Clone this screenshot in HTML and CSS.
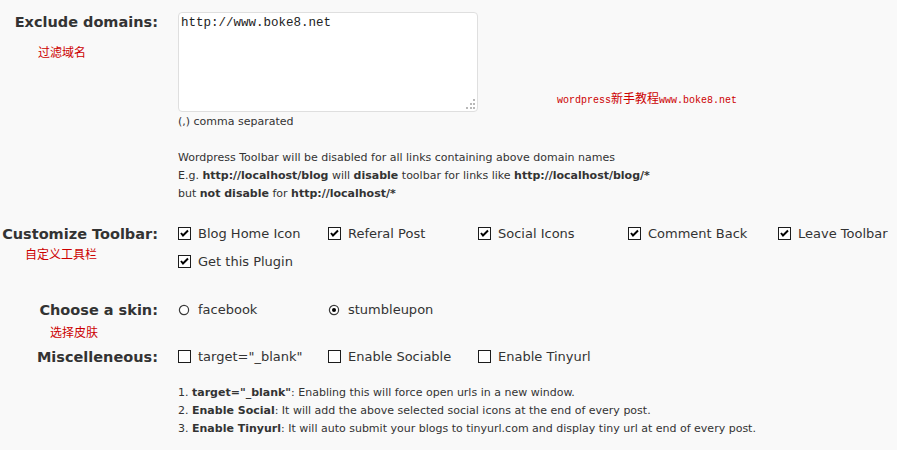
FILE: index.html
```html
<!DOCTYPE html>
<html lang="en">
  <head>
    <meta charset="UTF-8" />
    <meta name="viewport" content="width=device-width, initial-scale=1.0" />
    <title>Wordpress Toolbar Options</title>
    <link rel="stylesheet" href="styles.css">
  </head>
  <body>
    <div class="options">
      <!-- exclude domains -->
      <div class="row row-exclude">
        <div class="label-cell">
          <div class="label">Exclude domains:</div>
          <div class="cn cn-exclude">过滤域名</div>
        </div>
        <div class="field">
          <div class="field-line">
            <div class="textarea-wrap">
              <textarea class="domains" spellcheck="false">http://www.boke8.net</textarea>
              <svg class="grip" width="12" height="12" viewBox="0 0 12 12">
                <rect x="9" y="1" width="2" height="2" fill="#b8b8b8" />
                <rect x="6" y="5" width="2" height="2" fill="#b8b8b8" />
                <rect x="9" y="5" width="2" height="2" fill="#b8b8b8" />
                <rect x="2" y="9" width="2" height="2" fill="#b8b8b8" />
                <rect x="6" y="9" width="2" height="2" fill="#b8b8b8" />
                <rect x="9" y="9" width="2" height="2" fill="#b8b8b8" />
              </svg>
            </div>
            <span class="site-note">wordpress<span class="site-cjk">新手教程</span>www.boke8.net</span>
          </div>
          <p class="hint">(,) comma separated</p>
          <div class="notes notes-exclude">
            <p>Wordpress Toolbar will be disabled for all links containing above domain names</p>
            <p>E.g. <b>http://localhost/blog</b> will <b>disable</b> toolbar for links like <b>http://localhost/blog/*</b></p>
            <p>but <b>not disable</b> for <b>http://localhost/*</b></p>
          </div>
        </div>
      </div>

      <!-- toolbar items -->
      <div class="row row-toolbar">
        <div class="label-cell">
          <div class="label">Customize Toolbar:</div>
          <div class="cn cn-toolbar">自定义工具栏</div>
        </div>
        <div class="choices choices-toolbar">
          <label class="choice"><svg class="box" width="13" height="13" viewBox="0 0 13 13"><rect x="0.5" y="0.5" width="12" height="12" fill="#fff" stroke="#1c1c1c" /><path d="M3 6 L5 8.5 L10 3.5" fill="none" stroke="#000" stroke-width="2" /></svg>Blog Home Icon</label>
          <label class="choice"><svg class="box" width="13" height="13" viewBox="0 0 13 13"><rect x="0.5" y="0.5" width="12" height="12" fill="#fff" stroke="#1c1c1c" /><path d="M3 6 L5 8.5 L10 3.5" fill="none" stroke="#000" stroke-width="2" /></svg>Referal Post</label>
          <label class="choice"><svg class="box" width="13" height="13" viewBox="0 0 13 13"><rect x="0.5" y="0.5" width="12" height="12" fill="#fff" stroke="#1c1c1c" /><path d="M3 6 L5 8.5 L10 3.5" fill="none" stroke="#000" stroke-width="2" /></svg>Social Icons</label>
          <label class="choice"><svg class="box" width="13" height="13" viewBox="0 0 13 13"><rect x="0.5" y="0.5" width="12" height="12" fill="#fff" stroke="#1c1c1c" /><path d="M3 6 L5 8.5 L10 3.5" fill="none" stroke="#000" stroke-width="2" /></svg>Comment Back</label>
          <label class="choice"><svg class="box" width="13" height="13" viewBox="0 0 13 13"><rect x="0.5" y="0.5" width="12" height="12" fill="#fff" stroke="#1c1c1c" /><path d="M3 6 L5 8.5 L10 3.5" fill="none" stroke="#000" stroke-width="2" /></svg>Leave Toolbar</label>
          <label class="choice"><svg class="box" width="13" height="13" viewBox="0 0 13 13"><rect x="0.5" y="0.5" width="12" height="12" fill="#fff" stroke="#1c1c1c" /><path d="M3 6 L5 8.5 L10 3.5" fill="none" stroke="#000" stroke-width="2" /></svg>Get this Plugin</label>
        </div>
      </div>

      <!-- skin -->
      <div class="row row-skin">
        <div class="label-cell">
          <div class="label">Choose a skin:</div>
          <div class="cn cn-skin">选择皮肤</div>
        </div>
        <div class="choices">
          <label class="choice"><svg class="radio" width="12" height="12" viewBox="0 0 12 12"><circle cx="6" cy="6" r="4.6" fill="#fff" stroke="#3a3a3a" stroke-width="1.2" /></svg>facebook</label>
          <label class="choice"><svg class="radio" width="12" height="12" viewBox="0 0 12 12"><circle cx="6" cy="6" r="4.6" fill="#fff" stroke="#3a3a3a" stroke-width="1.2" /><circle cx="6" cy="6" r="2" fill="#000" /></svg>stumbleupon</label>
        </div>
      </div>

      <!-- misc -->
      <div class="row row-misc">
        <div class="label-cell">
          <div class="label">Miscelleneous:</div>
        </div>
        <div class="field">
          <div class="choices">
            <label class="choice"><svg class="box" width="13" height="13" viewBox="0 0 13 13"><rect x="0.5" y="0.5" width="12" height="12" fill="#fff" stroke="#1c1c1c" /></svg>target="_blank"</label>
            <label class="choice"><svg class="box" width="13" height="13" viewBox="0 0 13 13"><rect x="0.5" y="0.5" width="12" height="12" fill="#fff" stroke="#1c1c1c" /></svg>Enable Sociable</label>
            <label class="choice"><svg class="box" width="13" height="13" viewBox="0 0 13 13"><rect x="0.5" y="0.5" width="12" height="12" fill="#fff" stroke="#1c1c1c" /></svg>Enable Tinyurl</label>
          </div>
          <div class="notes notes-misc">
            <p>1. <b>target="_blank"</b>: Enabling this will force open urls in a new window.</p>
            <p>2. <b>Enable Social</b>: It will add the above selected social icons at the end of every post.</p>
            <p>3. <b>Enable Tinyurl</b>: It will auto submit your blogs to tinyurl.com and display tiny url at end of every post.</p>
          </div>
        </div>
      </div>
    </div>
  </body>
</html>
```

FILE: styles.css
```css
body {
  margin: 0;
  padding: 0;
  background-color: #f9f9f9;
  color: #333;
  font-family: "DejaVu Sans", Verdana, sans-serif;
}
.options {
  padding-top: 12px;
}
.row {
  display: grid;
  grid-template-columns: 158px 1fr;
  column-gap: 20px;
  align-items: start;
}
.label {
  text-align: right;
  font-size: 14.5px;
  font-weight: bold;
  line-height: 20px;
  color: #333;
  white-space: nowrap;
}
.cn {
  font-family: "Noto Sans CJK SC", sans-serif;
  font-size: 12px;
  line-height: 16px;
  color: #cc0000;
}
.cn-exclude {
  margin-top: 12px;
  padding-left: 38px;
}
.cn-toolbar {
  margin-top: 2px;
  padding-left: 25px;
}
.cn-skin {
  margin-top: 4px;
  padding-left: 50px;
}
.row-toolbar {
  margin-top: 17px;
}
.row-toolbar .label,
.row-skin .label,
.row-misc .label {
  padding-top: 4px;
}
.row-skin {
  margin-top: 20px;
}
.row-misc {
  margin-top: 3px;
}
.field-line {
  display: flex;
  align-items: flex-end;
}
.textarea-wrap {
  position: relative;
  width: 300px;
  height: 100px;
}
.domains {
  box-sizing: border-box;
  width: 300px;
  height: 100px;
  margin: 0;
  padding: 2px 2px;
  border: 1px solid #dfdfdf;
  border-radius: 4px;
  background: #fff;
  color: #222;
  font-family: "Liberation Mono", monospace;
  font-size: 12.5px;
  line-height: 16px;
  resize: none;
  outline: none;
}
.grip {
  position: absolute;
  right: 2px;
  bottom: 2px;
}
.site-note {
  margin-left: 79px;
  margin-bottom: 4px;
  font-family: "Liberation Mono", monospace;
  font-size: 10px;
  line-height: 14px;
  color: #cc0000;
  white-space: nowrap;
}
.site-cjk {
  font-family: "Noto Sans CJK SC", sans-serif;
  font-size: 12px;
}
.hint {
  margin: 2px 0 0;
  font-size: 11px;
  line-height: 16px;
  color: #333;
}
.notes p {
  margin: 0;
  font-size: 11px;
  line-height: 18px;
  color: #333;
  white-space: nowrap;
}
.notes-exclude {
  margin-top: 19px;
}
.notes-misc {
  margin-top: 13px;
}
.choices {
  display: grid;
  grid-template-columns: 150px 150px 150px 150px auto;
}
.choice {
  display: flex;
  align-items: center;
  height: 28px;
  padding-bottom: 1px;
  box-sizing: border-box;
  font-size: 13px;
  color: #333;
  white-space: nowrap;
}
.box {
  flex: none;
  margin-right: 7px;
}
.radio {
  flex: none;
  margin-right: 8px;
}
```
